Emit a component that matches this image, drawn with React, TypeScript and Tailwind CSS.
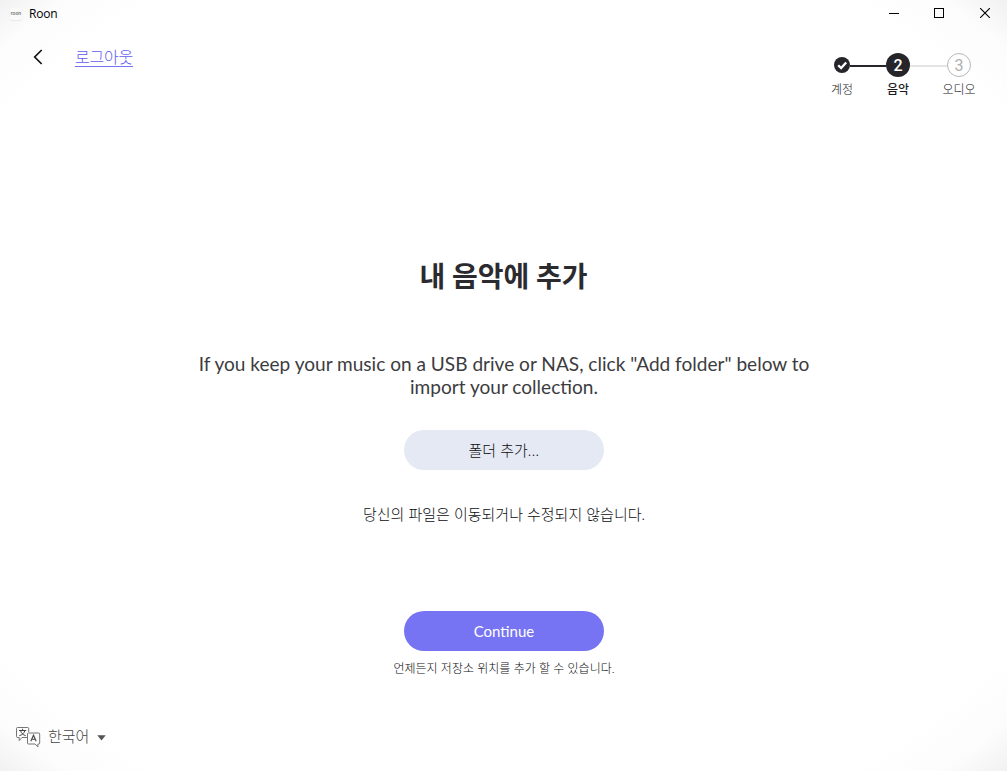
import type { ReactNode } from "react";

const TitleBar = () => {
    return (
        <header className="flex h-[27px] shrink-0 items-center justify-between pl-[10px]">
            <div className="flex items-center">
                <div className="flex h-3 w-3 items-center justify-center rounded-[2px] bg-[#fafafa] shadow-[0_1px_1px_#e8e8e8]">
                    <span className="font-['Lato',sans-serif] text-[5px] font-bold leading-none text-[#777]">roon</span>
                </div>
                <span className="ml-[7px] font-['Open_Sans',sans-serif] text-[12px] leading-4 tracking-[-0.2px] text-black">Roon</span>
            </div>
            <div className="flex h-full items-center">
                <button className="flex w-[45px] justify-center" aria-label="Minimize">
                    <svg className="-mt-px mr-px" width="10" height="11" viewBox="0 0 10 11" shapeRendering="crispEdges">
                        <path d="M0 5.5h10" stroke="#000" />
                    </svg>
                </button>
                <button className="flex w-[45px] justify-center" aria-label="Maximize">
                    <svg className="-mt-px mr-px" width="10" height="10" viewBox="0 0 10 10" fill="none" shapeRendering="crispEdges">
                        <rect x="0.5" y="0.5" width="9" height="9" stroke="#000" />
                    </svg>
                </button>
                <button className="flex w-[45px] justify-center" aria-label="Close">
                    <svg className="-mt-px" width="10" height="10" viewBox="0 0 10 10" fill="none">
                        <path d="M0 0l10 10M10 0L0 10" stroke="#000" strokeWidth="1.1" />
                    </svg>
                </button>
            </div>
        </header>
    );
};

const Step = ({ children, label, className }: { children: ReactNode; label: string; className: string }) => {
    return (
        <div className={`flex flex-col items-center ${className}`}>
            <div className="flex h-6 items-center">{children}</div>
            <span className="mt-1 text-[12px] leading-[18px] whitespace-nowrap">{label}</span>
        </div>
    );
};

const Steps = () => {
    return (
        <div className="mt-[26px] mr-9 flex">
            <Step label="계정" className="w-4 font-light text-[#222]">
                <svg width="16" height="16" viewBox="0 0 16 16" fill="none">
                    <circle cx="8" cy="8" r="8" fill="#26262a" />
                    <path d="M4.2 8.2l2.9 2.9 5.1-5.7" stroke="#fff" strokeWidth="2.3" />
                </svg>
            </Step>
            <div className="mt-[12px] h-[2px] w-9 bg-[#26262a]" />
            <Step label="음악" className="w-6 font-medium text-[#1a1a1e]">
                <span className="flex h-6 w-6 items-center justify-center rounded-full bg-[#26262a] pt-[2px] font-['Roboto',sans-serif] text-[16px] font-medium leading-none text-white">2</span>
            </Step>
            <div className="mt-[12px] h-[2px] w-[37px] bg-[#e4e4e4]" />
            <Step label="오디오" className="w-6 font-light text-[#222]">
                <span className="flex h-6 w-6 items-center justify-center rounded-full border border-[#b8b8b8] pt-[2px] font-['Roboto',sans-serif] text-[16px] font-normal leading-none text-[#b0b0b0]">3</span>
            </Step>
        </div>
    );
};

const LanguagePicker = () => {
    return (
        <button className="flex items-start text-[#444]">
            <svg className="mt-[2px]" width="25" height="21" viewBox="0 0 25 21" fill="none" stroke="#666" strokeWidth="0.9">
                <path d="M11 10.5H6L3.2 13.6V10.5H1.5a1 1 0 0 1-1-1v-8a1 1 0 0 1 1-1h10.2a1 1 0 0 1 1 1V5" />
                <path d="M12.5 6h10.2a1 1 0 0 1 1 1v9a1 1 0 0 1-1 1h-.8v2.8L19 17h-6.5a1 1 0 0 1-1-1V7a1 1 0 0 1 1-1z" />
                <path d="M3 3.5h7.2M6.6 1.8v1.7M4.6 3.7c.5 2.2 2.3 4.1 5.1 5M8.8 3.7c-.5 2.2-2.5 4.2-5.5 5" stroke="#444" strokeWidth="1" />
                <path d="M14.8 14.2l2.7-6 2.7 6M15.7 12.3h3.6" stroke="#444" strokeWidth="1.1" />
            </svg>
            <span className="ml-[7px] text-[15px] font-light leading-[22px]">한국어</span>
            <svg className="ml-2 mt-[10px]" width="9" height="6" viewBox="0 0 9 6">
                <path d="M0.3 0.3h8.4L4.5 5.6z" fill="#555" />
            </svg>
        </button>
    );
};

export default function App() {
    return (
        <div className="flex h-[771px] w-[1007px] flex-col overflow-hidden bg-[radial-gradient(ellipse_farthest-corner,#fff_85%,#fcfcfc_94%,#f1f1f1_100%)] font-['Lato','Noto_Sans_CJK_KR',sans-serif] text-[#2b2b2f]">
            <TitleBar />
            <div className="flex h-[103px] shrink-0 items-start justify-between">
                <div className="flex items-center pt-[20px] pl-[33px]">
                    <button aria-label="Back">
                        <svg width="10" height="16" viewBox="0 0 10 16" fill="none">
                            <path d="M8.7 1L1.7 8l7 7" stroke="#111" strokeWidth="1.7" />
                        </svg>
                    </button>
                    <a className="ml-8 border-b border-[#7674f2] text-[16px] font-light leading-[19px] tracking-[-0.2px] text-[#5f5cf0]">로그아웃</a>
                </div>
                <Steps />
            </div>

            <main className="flex flex-1 flex-col items-center pl-px">
                <h1 className="mt-[126px] mr-px text-[28px] font-bold leading-[40px]">내 음악에 추가</h1>
                <p className="mt-[56px] w-[640px] text-center text-[19.07px] leading-[23px] text-[#3c3c40]">
                    If you keep your music on a USB drive or NAS, click "Add folder" below to import your collection.
                </p>
                <button className="mt-8 h-10 w-[200px] rounded-full bg-[#e5e9f3] text-[15px] font-light text-[#0c0c0f]">
                    폴더 추가<span className="tracking-[0.4px]">...</span>
                </button>
                <p className="mt-[33px] text-[15px] font-light leading-[22px] text-[#0c0c0f]">당신의 파일은 이동되거나 수정되지 않습니다.</p>
                <button className="mt-[86px] h-10 w-[200px] rounded-full bg-[#7674f2] text-[15px] text-white">Continue</button>
                <p className="mt-[9px] text-[12px] font-light leading-[18px] text-[#0c0c0f]">언제든지 저장소 위치를 추가 할 수 있습니다.</p>
            </main>

            <footer className="flex h-[46px] shrink-0 items-start pl-4">
                <LanguagePicker />
            </footer>
        </div>
    );
}
